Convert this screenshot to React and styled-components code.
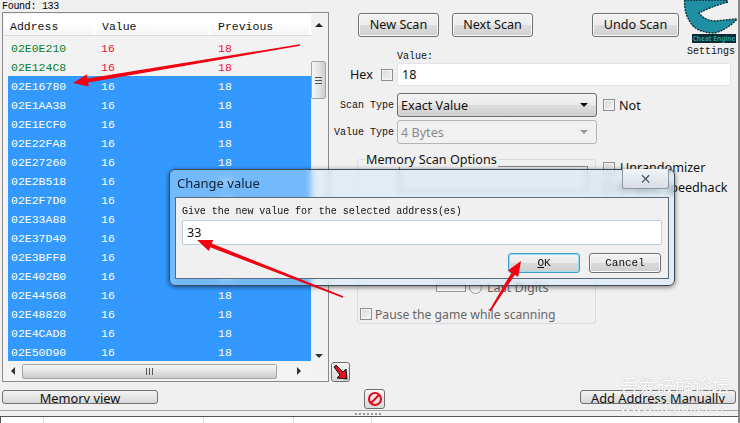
import React from "react";
import styled, { createGlobalStyle } from "styled-components";

const Global = createGlobalStyle`
  html, body { margin: 0; padding: 0; background: #f0f0f0; }
  * { box-sizing: border-box; }
`;
const mono = `"Liberation Mono", "DejaVu Sans Mono", monospace`;
const ui = `"Noto Sans", "DejaVu Sans", sans-serif`;

const Page = styled.div`
  position: relative; width: 740px; height: 423px; overflow: hidden;
  display: flex; flex-direction: column; background: #f0f0f0; color: #111;
  font-family: ${ui}; font-size: 12.6px;
  border-right: 2px solid #8a8a8a;
`;
const Top = styled.div`display: flex; height: 382px; flex: none;`;
const Left = styled.div`width: 330px; padding-left: 2px; flex: none; display: flex; flex-direction: column;`;
const Found = styled.div`height: 12px; font: 10px/13px ${mono}; letter-spacing: -.3px; color: #000;`;
const ListBox = styled.div`
  width: 327px; height: 370px; border: 1px solid #8a8a8a; background: #f2f2f2;
  display: grid; grid-template-columns: 307px 1fr; grid-template-rows: 1fr 18px;
  padding: 1px;
`;
const ListMain = styled.div`grid-column: 1; grid-row: 1; display: flex; flex-direction: column; min-height: 0; overflow: hidden;`;
const Header = styled.div`
  height: 22px; display: flex; flex: none; font: 11.5px/25px ${mono}; color: #111;
  background: linear-gradient(#fff 0 45%, #f4f5f7 100%); border-bottom: 1px solid #d8dadd;
`;
const HeadCell = styled.div`
  width: ${p => p.$w}px; padding-left: ${p => p.$pad}px; border-right: 2px solid #fff;
  flex: none;
`;
const Rows = styled.div`padding: 2px 0 0 4px; flex: 1;`;
const Row = styled.div`
  height: 19px; display: flex; font: 11.5px/21px ${mono}; padding-left: 3px;
  background: ${p => (p.$sel ? "#3399ff" : "transparent")};
  color: ${p => (p.$sel ? "#fff" : "#ee1133")};
`;
const Addr = styled.span`width: 90px; color: ${p => (p.$sel ? "#fff" : "#0a7f2e")};`;
const Val = styled.span`width: 117px;`;
const VBar = styled.div`
  grid-column: 2; grid-row: 1 / 3; display: flex; flex-direction: column; align-items: center;
  width: 15px; padding-top: 9px;
`;
const UpTri = styled.div`width: 0; height: 0; border: 4px solid transparent; border-top: 0; border-bottom: 4px solid #222;`;
const DownTri = styled(UpTri)`border-bottom: 0; border-top: 4px solid #333; margin-top: 255px;`;
const VThumb = styled.div`
  margin-top: 34px; width: 15px; height: 38px; border: 1px solid #a5a5a5; border-radius: 2px; flex: none;
  background: linear-gradient(90deg, #f6f6f6, #e4e4e4 50%, #cfcfcf);
  display: flex; align-items: center; justify-content: center;
`;
const Grip = styled.div`width: 7px; height: 7px; border-top: 1px solid #555; border-bottom: 1px solid #555; position: relative;
  &::after { content: ""; position: absolute; left: 0; right: 0; top: 2px; height: 1px; background: #555; }
`;
const HBar = styled.div`grid-column: 1; grid-row: 2; display: flex; align-items: center; padding: 0 6px 0 7px; height: 18px; background: #f3f3f3;`;
const LeftTri = styled.div`width: 0; height: 0; border: 4px solid transparent; border-left: 0; border-right: 4px solid #333;`;
const RightTri = styled.div`width: 0; height: 0; border: 4px solid transparent; border-right: 0; border-left: 4px solid #333; margin-left: 20px;`;
const HThumb = styled.div`
  margin-left: 7px; width: 255px; height: 15px; border: 1px solid #a5a5a5; border-radius: 2px;
  background: linear-gradient(#f6f6f6, #e2e2e2 50%, #cbcbcb);
  display: flex; align-items: center; justify-content: center;
`;
const HGrip = styled.div`width: 7px; height: 7px; border-left: 1px solid #555; border-right: 1px solid #555; position: relative;
  &::after { content: ""; position: absolute; top: 0; bottom: 0; left: 2px; width: 1px; background: #555; }
`;

const Right = styled.div`flex: 1; display: flex; flex-direction: column; min-width: 0;`;
const HeadRow = styled.div`display: flex; height: 50px; padding-left: 28px; flex: none;`;
const Btn = styled.div`
  width: ${p => p.$w}px; height: 24px; margin-top: 13px; margin-left: ${p => p.$ml || 0}px; flex: none;
  border: 1px solid #707070; border-radius: 3px; text-align: center; line-height: 22px;
  background: linear-gradient(#f3f3f3, #ececec 48%, #dcdcdc 52%, #d0d0d0);
  box-shadow: inset 0 0 0 1px #fbfbfb;
`;
const LogoBox = styled.div`width: 54px; margin-left: 5px; height: 58px; flex: none; display: flex; flex-direction: column; align-items: center;`;
const LogoTag = styled.div`
  width: 44px; height: 9px; margin: 0 0 2px 6px; background: #0b2a33; color: #1f9db0;
  font: 700 6.5px/9px ${ui}; white-space: nowrap; text-align: center;
`;
const MonoLabel = styled.div`font: 10px/13px ${mono}; color: #111;`;
const ValueLabel = styled(MonoLabel)`height: 13px; margin-left: 67px;`;
const Line = styled.div`display: flex; align-items: center; height: ${p => p.$h}px; margin-top: ${p => p.$mt || 0}px; flex: none;`;
const HexText = styled.span`margin-left: 20px; width: 31px;`;
const Check = styled.span`
  display: inline-block; width: 12px; height: 12px; flex: none; border: 1px solid #8e8f8f;
  background: linear-gradient(135deg, #d8d8d8, #f6f6f6);
  box-shadow: inset 0 0 0 1px #f4f4f4;
  margin-left: ${p => p.$ml || 0}px; margin-right: ${p => p.$mr || 0}px;
`;
const TextInput = styled.div`
  width: ${p => p.$w}px; height: ${p => p.$h}px; margin-left: ${p => p.$ml || 0}px; flex: none; background: #fff;
  border: 1px solid ${p => p.$bc || "#e2e3ea"}; padding-left: 4px; line-height: ${p => p.$h - 2}px; border-radius: 2px;
`;
const FieldLabel = styled(MonoLabel)`width: 64px; text-align: right; margin-right: 3px; flex: none;`;
const Select = styled.div`
  width: 200px; height: ${p => p.$h}px; flex: none; display: flex; align-items: center; justify-content: space-between;
  padding: 0 8px 0 3px; border-radius: 3px;
  border: 1px solid ${p => (p.$off ? "#b5b5b5" : "#6e6e6e")};
  color: ${p => (p.$off ? "#8a8a8a" : "#111")};
  background: ${p => (p.$off ? "#f1f1f1" : "linear-gradient(#f2f2f2, #ebebeb 50%, #dddddd 52%, #cfcfcf)")};
`;
const Caret = styled.span`width: 0; height: 0; border: 4px solid transparent; border-bottom: 0; border-top: 4px solid ${p => (p.$off ? "#999" : "#111")};`;
const OptionsRow = styled.div`display: flex; margin: 15px 0 0 27px; flex: none;`;
const Group = styled.div`
  position: relative; width: 239px; height: 165px; border: 1px solid #d6dde2; border-radius: 3px;
  display: flex; flex-direction: column; color: #666;
`;
const GroupTitle = styled.span`position: absolute; left: 7px; top: -7px; padding: 0 1px; background: #f0f0f0; color: #111; line-height: 14px;`;
const GroupSelect = styled.div`width: 189px; height: 26px; margin: 6px 0 0 41px; border: 1px solid #8a8a8a; flex: none; background: #eee;`;
const DigitsRow = styled.div`display: flex; align-items: center; margin: auto 0 0 78px; height: 16px;`;
const SmallBox = styled.div`width: 30px; height: 9px; border: 1px solid #9a9a9a; background: #fff;`;
const Radio = styled.span`width: 13px; height: 13px; border: 1px solid #999; border-radius: 50%; margin: 0 5px 0 3px; background: #f3f3f3;`;
const PauseRow = styled.div`display: flex; align-items: center; margin: 11px 0 1px 2px; height: 16px; font-size: 12.2px;`;
const SideChecks = styled.div`display: flex; flex-direction: column; margin: 0 0 0 7px; gap: 3px;`;
const SideCheck = styled.div`display: flex; align-items: center; height: 17px; white-space: nowrap;`;
const ArrowBtn = styled.div`
  width: 19px; height: 20px; margin: 38px 0 0 1px; border: 1px solid #707070; border-radius: 3px; flex: none;
  background: linear-gradient(#f5f5f5, #dadada); display: flex; align-items: center; justify-content: center;
`;

const Toolbar = styled.div`display: flex; height: 28px; flex: none;`;
const BarBtn = styled.div`
  width: 156px; height: 14px; margin: 8px 0 0 ${p => p.$ml}px; border: 1px solid #707070; border-radius: 3px; overflow: hidden;
  text-align: center; font-size: 12.8px; line-height: 15px; flex: none; white-space: nowrap;
  background: linear-gradient(#f3f3f3, #d8d8d8);
`;
const StopBtn = styled.div`
  width: 21px; height: 20px; margin: 7px 0 0 206px; flex: none; border: 1px solid #707070; border-radius: 3px;
  background: linear-gradient(#f5f5f5, #dadada); display: flex; align-items: center; justify-content: center;
`;
const Splitter = styled.div`
  height: 7px; flex: none; border-top: 1px solid #a8a8a8; border-bottom: 1px solid #555;
  display: flex; justify-content: flex-start; padding: 2px 0 0 355px; 
`;
const Dots = styled.div`width: 28px; height: 2px; background: repeating-linear-gradient(90deg, #999 0 2px, transparent 2px 4px);`;
const Bottom = styled.div`flex: 1; display: flex; background: #fff; border-left: 1px solid #555;`;
const Col = styled.div`width: ${p => p.$w}px; border-right: 1px solid #ddd; flex: none;`;

const Dialog = styled.div`
  position: absolute; left: 169px; top: 169px; width: 506px; height: 117px; border: 1px solid #3d4a55; border-radius: 6px;
  background: rgba(205, 232, 250, .42); backdrop-filter: blur(3px);
  box-shadow: 0 1px 5px rgba(0,0,0,.55); display: flex; flex-direction: column; padding: 0 5px 6px;
`;
const DialogHead = styled.div`height: 27px; flex: none; display: flex; justify-content: space-between; padding: 4px 0 0 2px; color: #10202c; font-size: 13px;`;
const Close = styled.div`
  width: 47px; height: 20px; margin: -5px 0 0 0; border: 1px solid #8b97a3; border-top: 0; border-radius: 0 0 3px 3px;
  background: linear-gradient(#f0f4f7, #d8dee4); display: flex; align-items: center; justify-content: center;
  font: 700 14px/1 "DejaVu Sans", sans-serif; color: #4a5560; text-shadow: 0 0 1px #fff;
`;
const DialogBody = styled.div`
  flex: 1; background: #f0f0f0; border: 1px solid #5b6a78; padding: 7px 6px 0; display: flex; flex-direction: column;
`;
const Prompt = styled.div`font: 10px/13px ${mono}; letter-spacing: -.05px; color: #111;`;
const DialogInput = styled(TextInput)`margin-top: 2px;`;
const DialogBtns = styled.div`display: flex; justify-content: flex-end; gap: 9px; margin-top: 8px; padding-right: 1px;`;
const DlgBtn = styled.div`
  width: 72px; height: 20px; border-radius: 3px; font: 11px/18px ${mono}; text-align: center;
  border: 1px solid ${p => (p.$on ? "#3c9bc9" : "#707070")};
  box-shadow: ${p => (p.$on ? "inset 0 0 0 1px #9be0f5" : "inset 0 0 0 1px #fafafa")};
  background: linear-gradient(#f3f3f3, #e9e9e9 48%, #d9d9d9 52%, #cfcfcf);
`;
const Under = styled.span`text-decoration: underline;`;

const Overlay = styled.svg`position: absolute; inset: 0; pointer-events: none;`;
const Watermark = styled.div`
  position: absolute; left: 620px; top: 375px; width: 115px; color: #fff; pointer-events: none;
  text-shadow: 0 0 1px #9a9a9a;
`;
const WmCn = styled.div`font: 18.3px/20px "Noto Sans CJK SC", sans-serif; white-space: nowrap;`;
const WmEn = styled.div`font: 14px/17px ${ui}; margin-top: 3px; white-space: nowrap; opacity: .85;`;

const addresses = ["02E0E210","02E124C8","02E16780","02E1AA38","02E1ECF0","02E22FA8","02E27260","02E2B518","02E2F7D0","02E33A88","02E37D40","02E3BFF8","02E402B0","02E44568","02E48820","02E4CAD8","02E50D90"];

function arrowPoints(x1, y1, x2, y2, neck = 2, head = 6, len = 15) {
  const d = Math.hypot(x2 - x1, y2 - y1);
  const ux = (x2 - x1) / d, uy = (y2 - y1) / d, nx = -uy, ny = ux;
  const bx = x2 - ux * len, by = y2 - uy * len;
  const p = (x, y) => `${x.toFixed(1)},${y.toFixed(1)}`;
  return [
    p(x1 + nx * .8, y1 + ny * .8), p(bx + nx * neck, by + ny * neck), p(bx + nx * head, by + ny * head),
    p(x2, y2), p(bx - nx * head, by - ny * head), p(bx - nx * neck, by - ny * neck), p(x1 - nx * .8, y1 - ny * .8),
  ].join(" ");
}

const Logo = () => (
  <svg width="54" height="34" viewBox="0 0 54 34">
    <path d="M0 0 L42 0 L44 2 Q26 7 15 13 Q20 20 30 21 L53 19 Q44 29 31 33 Q18 33 10 27 Q2 18 1 8 Z" fill="#1f8fa3" stroke="#0a2d38" strokeWidth="1.4" strokeDasharray="2 1" />
  </svg>
);

export default function App() {
  return (
    <Page>
      <Global />
      <Top>
        <Left>
          <Found>Found: 133</Found>
          <ListBox>
            <ListMain>
              <Header>
                <HeadCell $w={91} $pad={6}>Address</HeadCell>
                <HeadCell $w={116} $pad={7}>Value</HeadCell>
                <HeadCell $w={100} $pad={7}>Previous</HeadCell>
              </Header>
              <Rows>
                {addresses.map((a, i) => (
                  <Row key={a} $sel={i > 1}>
                    <Addr $sel={i > 1}>{a}</Addr>
                    <Val>16</Val>
                    <span>18</span>
                  </Row>
                ))}
              </Rows>
            </ListMain>
            <VBar>
              <UpTri />
              <VThumb><Grip /></VThumb>
              <DownTri />
            </VBar>
            <HBar>
              <LeftTri />
              <HThumb><HGrip /></HThumb>
              <RightTri />
            </HBar>
          </ListBox>
        </Left>
        <Right>
          <HeadRow>
            <Btn $w={81}>New Scan</Btn>
            <Btn $w={81} $ml={13}>Next Scan</Btn>
            <Btn $w={87} $ml={59}>Undo Scan</Btn>
            <LogoBox>
              <Logo />
              <LogoTag>Cheat Engine</LogoTag>
              <MonoLabel>Settings</MonoLabel>
            </LogoBox>
          </HeadRow>
          <ValueLabel>Value:</ValueLabel>
          <Line $h={23}>
            <HexText>Hex</HexText>
            <Check />
            <TextInput $w={334} $h={23} $ml={4}>18</TextInput>
          </Line>
          <Line $h={24} $mt={7}>
            <FieldLabel>Scan Type</FieldLabel>
            <Select $h={24}>Exact Value<Caret /></Select>
            <Check $ml={6} $mr={4} />Not
          </Line>
          <Line $h={24} $mt={3}>
            <FieldLabel>Value Type</FieldLabel>
            <Select $h={24} $off>4 Bytes<Caret $off /></Select>
          </Line>
          <OptionsRow>
            <Group>
              <GroupTitle>Memory Scan Options</GroupTitle>
              <GroupSelect />
              <DigitsRow><SmallBox /><Radio />Last Digits</DigitsRow>
              <PauseRow><Check $mr={3} />Pause the game while scanning</PauseRow>
            </Group>
            <SideChecks>
              <SideCheck><Check $mr={5} />Unrandomizer</SideCheck>
              <SideCheck><Check $mr={5} />Enable Speedhack</SideCheck>
            </SideChecks>
          </OptionsRow>
          <ArrowBtn>
            <svg width="15" height="15" viewBox="0 0 15 15">
              <path d="M1 2 L3 0 L10 7 L13 4 L14 14 L4 13 L7 10 Z" fill="#e8101c" stroke="#111" strokeWidth="1" />
            </svg>
          </ArrowBtn>
        </Right>
      </Top>
      <Toolbar>
        <BarBtn $ml={2}>Memory view</BarBtn>
        <StopBtn>
          <svg width="16" height="16" viewBox="0 0 16 16">
            <circle cx="8" cy="8" r="6" fill="none" stroke="#e01020" strokeWidth="2.2" />
            <path d="M3.5 12.5 L12.5 3.5" stroke="#e01020" strokeWidth="2.2" />
          </svg>
        </StopBtn>
        <BarBtn $ml={195}>Add Address Manually</BarBtn>
      </Toolbar>
      <Splitter><Dots /></Splitter>
      <Bottom>
        <Col $w={43} />
        <Col $w={160} />
        <Col $w={90} />
        <Col $w={78} />
      </Bottom>
      <Dialog>
        <DialogHead>
          <span>Change value</span>
          <Close>✕</Close>
        </DialogHead>
        <DialogBody>
          <Prompt>Give the new value for the selected address(es)</Prompt>
          <DialogInput $w={480} $h={25} $bc="#b5cfe0">33</DialogInput>
          <DialogBtns>
            <DlgBtn $on><Under>O</Under>K</DlgBtn>
            <DlgBtn>Cancel</DlgBtn>
          </DialogBtns>
        </DialogBody>
      </Dialog>
      <Overlay width="740" height="423" viewBox="0 0 740 423">
        <polygon points={arrowPoints(300, 45, 73, 83)} fill="#f00010" />
        <polygon points={arrowPoints(343, 297, 197, 240)} fill="#f00010" />
        <polygon points={arrowPoints(490, 311, 521, 261)} fill="#f00010" />
      </Overlay>
      <Watermark>
        <WmCn>吾爱破解论坛</WmCn>
        <WmEn>www.52pojie.cn</WmEn>
      </Watermark>
    </Page>
  );
}
